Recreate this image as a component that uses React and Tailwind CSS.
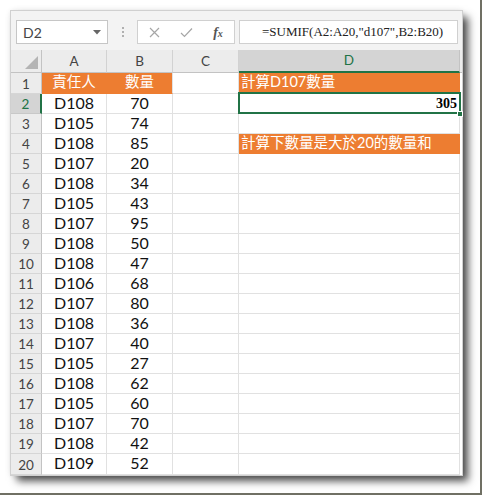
import React from "react";

const rows = [
  ["D108", 70], ["D105", 74], ["D108", 85], ["D107", 20], ["D108", 34],
  ["D105", 43], ["D107", 95], ["D108", 50], ["D108", 47], ["D106", 68],
  ["D107", 80], ["D108", 36], ["D107", 40], ["D105", 27], ["D108", 62],
  ["D105", 60], ["D107", 70], ["D108", 42], ["D109", 52],
];

const FONT = { fontFamily: 'Lato, "Noto Sans CJK TC", sans-serif' };

function RowHeader({ n, selected, h }) {
  return (
    <div
      className={
        "w-[31px] shrink-0 flex items-center justify-center pt-[2px] text-[13.5px] border-b " +
        (selected
          ? "bg-[#d4d4d4] text-[#217346] border-r-2 border-r-[#217346] border-b-[#c8c8c8]"
          : "bg-[#ececec] text-[#444] border-r border-r-[#c3c3c3] border-b-[#d6d6d6]")
      }
      style={{ height: h }}
    >
      {n}
    </div>
  );
}

function Cell({ w, children, className = "" }) {
  return (
    <div
      className={
        "shrink-0 h-full flex items-center border-r border-b border-[#e1e1e1] pb-[2px] " +
        className
      }
      style={{ width: w }}
    >
      {children}
    </div>
  );
}

export default function App() {
  return (
    <div className="w-[484px] h-[498px] bg-white overflow-hidden" style={FONT}>
      <div className="w-[482px] h-[495px] border-r-2 border-b-2 border-[#707064] pt-[11px] pl-[11px]">
        <div className="w-[451px] h-[464px] bg-white flex flex-col shadow-[0_0_0_1px_#d0d0d0,6px_6px_8px_rgba(0,0,0,0.7),0_0_6px_rgba(0,0,0,0.12)]">
          {/* Toolbar */}
          <div className="h-[39px] bg-[#f3f3f3] flex items-start pt-[9px] shrink-0">
            <div className="ml-[5px] w-[92px] h-[24px] bg-white border border-[#c6c6c6] flex items-center justify-between pl-[6px] pr-[6px] text-[14px] text-[#444]">
              <span>D2</span>
              <svg width="8" height="5" viewBox="0 0 8 5">
                <path d="M0 0 L8 0 L4 4.5 Z" fill="#666" />
              </svg>
            </div>
            <div className="w-[29px] h-[24px] flex flex-col items-center justify-center gap-[2px]">
              <div className="w-[2px] h-[2px] bg-[#b0b0b0]" />
              <div className="w-[2px] h-[2px] bg-[#b0b0b0]" />
              <div className="w-[2px] h-[2px] bg-[#b0b0b0]" />
            </div>
            <div className="w-[98px] h-[24px] bg-white border border-[#d0d0d0] flex items-center">
              <div className="flex-1 flex justify-center">
                <svg width="11" height="11" viewBox="0 0 11 11">
                  <path d="M1 1 L10 10 M10 1 L1 10" stroke="#a6a6a6" strokeWidth="1.2" />
                </svg>
              </div>
              <div className="flex-1 flex justify-center">
                <svg width="13" height="11" viewBox="0 0 13 11">
                  <path d="M1 6 L4.5 9.5 L12 1.5" stroke="#a6a6a6" strokeWidth="1.2" fill="none" />
                </svg>
              </div>
              <div className="flex-1 flex justify-center">
                <span className="italic font-bold text-[14px] text-[#555]" style={{ fontFamily: '"Liberation Serif", serif' }}>
                  f<span className="text-[10px]">x</span>
                </span>
              </div>
            </div>
            <div
              className="ml-[4px] w-[219px] h-[24px] bg-white border border-[#d0d0d0] flex items-center pl-[22px] text-[13px] text-[#222]"
              style={{ fontFamily: '"Liberation Serif", serif' }}
            >
              =SUMIF(A2:A20,"d107",B2:B20)
            </div>
          </div>

          {/* Column header row */}
          <div className="h-[23px] flex shrink-0 text-[13.5px] text-[#444]">
            <div className="w-[31px] h-full bg-[#ececec] border-r border-b border-[#c3c3c3] flex items-end justify-end pr-[3px] pb-[3px]">
              <svg width="13" height="13" viewBox="0 0 13 13">
                <path d="M13 0 L13 13 L0 13 Z" fill="#b4b4b4" />
              </svg>
            </div>
            {[["A", 65], ["B", 66], ["C", 66]].map(([l, w]) => (
              <div
                key={l}
                className="h-full bg-[#ececec] border-r border-r-[#d2d2d2] border-b border-b-[#c3c3c3] flex items-center justify-center"
                style={{ width: w }}
              >
                {l}
              </div>
            ))}
            <div className="w-[221px] h-full bg-[#d4d4d4] border-r border-r-[#c3c3c3] border-b-2 border-b-[#217346] flex items-center justify-center text-[#217346]">
              D
            </div>
            <div className="flex-1 h-full bg-[#ececec] border-b border-[#c3c3c3]" />
          </div>

          {/* Row 1 */}
          <div className="h-[21px] flex shrink-0 text-[16px] text-[#111]">
            <RowHeader n={1} h={21} />
            <Cell w={65} className="justify-center bg-[#ed7d31] text-white text-[14.5px] border-[#ed7d31]">責任人</Cell>
            <Cell w={66} className="justify-center bg-[#ed7d31] text-white text-[14.5px] border-r-[#e1e1e1] border-b-[#ed7d31]">數量</Cell>
            <Cell w={66} />
            <Cell w={221} className="bg-[#ed7d31] text-white text-[14.5px] pl-[2px] border-[#ed7d31]">計算D107數量</Cell>
          </div>

          {/* Rows 2..20 */}
          {rows.map(([name, val], i) => {
            const n = i + 2;
            const h = n === 20 ? 21 : 20;
            return (
              <div key={n} className="flex shrink-0 text-[16px] text-[#111]" style={{ height: h }}>
                <RowHeader n={n} h={h} selected={n === 2} />
                <Cell w={65} className="justify-center">{name}</Cell>
                <Cell w={66} className="justify-center">{val}</Cell>
                <Cell w={66} />
                {n === 2 ? (
                  <div className="relative w-[221px] h-full shrink-0 flex items-center justify-end pr-[3px] border-b border-[#e1e1e1]">
                    <span className="font-bold text-[14px] text-black" style={{ fontFamily: '"Liberation Serif", serif' }}>305</span>
                    <div className="absolute left-[-1px] top-[-2px] right-[-1px] bottom-[-1px] border-2 border-[#217346]" />
                    <div className="absolute right-[-3px] bottom-[-4px] w-[6px] h-[6px] bg-[#217346] border border-white" />
                  </div>
                ) : n === 4 ? (
                  <Cell w={221} className="bg-[#ed7d31] text-white text-[14.5px] pl-[2px] border-[#ed7d31]">
                    計算下數量是大於20的數量和
                  </Cell>
                ) : (
                  <Cell w={221} />
                )}
              </div>
            );
          })}
        </div>
      </div>
    </div>
  );
}
